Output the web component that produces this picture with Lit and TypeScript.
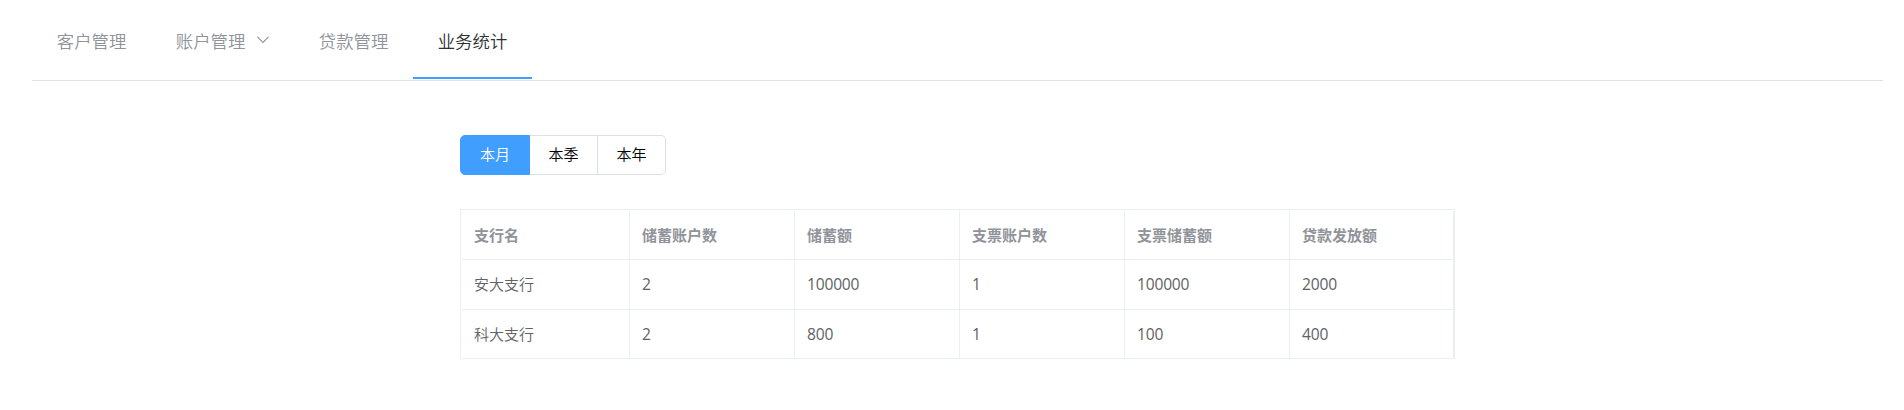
import { LitElement, html, css } from "lit";
import { customElement, state } from "lit/decorators.js";
import { classMap } from "lit/directives/class-map.js";

interface MenuItem {
  label: string;
  submenu?: boolean;
}

const MENU: MenuItem[] = [
  { label: "客户管理" },
  { label: "账户管理", submenu: true },
  { label: "贷款管理" },
  { label: "业务统计" },
];

const PERIODS = ["本月", "本季", "本年"];

const COLUMNS = ["支行名", "储蓄账户数", "储蓄额", "支票账户数", "支票储蓄额", "贷款发放额"];

const ROWS = [
  ["安大支行", "2", "100000", "1", "100000", "2000"],
  ["科大支行", "2", "800", "1", "100", "400"],
];

@customElement("nav-menu")
export class NavMenu extends LitElement {
  @state() private active = 3;

  static styles = css`
    :host {
      display: block;
      margin: 0 21px 0 32px;
      border-bottom: 1px solid #e1e1e2;
    }
    .menu {
      display: flex;
      height: 76px;
      padding: 4px 0 0;
      box-sizing: content-box;
    }
    .item {
      box-sizing: border-box;
      display: flex;
      align-items: center;
      height: 75px;
      padding: 0 24.6px 0 24.8px;
      border-bottom: 2px solid transparent;
      font-size: 17.4px;
      font-weight: 350;
      line-height: 26px;
      color: #909399;
      white-space: nowrap;
      cursor: pointer;
    }
    .active {
      color: #303133;
      border-bottom-color: #409eff;
    }
    .arrow {
      display: block;
      width: 12px;
      height: 8px;
      margin: 0 0 1px 12px;
      fill: none;
      stroke: #909399;
      stroke-width: 1.1;
    }
  `;

  render() {
    return html`<nav class="menu">
      ${MENU.map(
        (item, i) => html`<div
          class=${classMap({ item: true, active: i === this.active })}
          @click=${() => (this.active = i)}
        >
          <span>${item.label}</span>
          ${item.submenu
            ? html`<svg class="arrow" viewBox="0 0 12 8"><path d="M.7 1.2 6 6.5 11.3 1.2" stroke-linecap="round" /></svg>`
            : null}
        </div>`
      )}
    </nav>`;
  }
}

@customElement("period-switch")
export class PeriodSwitch extends LitElement {
  @state() private selected = 0;

  static styles = css`
    :host {
      display: flex;
    }
    .button {
      box-sizing: border-box;
      width: 68px;
      height: 40px;
      margin: 0;
      padding: 0 0 1px;
      border: 1px solid #dcdfe6;
      border-left: 0;
      background: #fff;
      color: #000;
      font: inherit;
      font-size: 15px;
      font-weight: 350;
      line-height: 1;
      text-align: center;
      cursor: pointer;
    }
    .button:first-child {
      width: 70px;
      border-left: 1px solid #dcdfe6;
      border-radius: 5px 0 0 5px;
    }
    .button:last-child {
      border-radius: 0 5px 5px 0;
    }
    .button.selected {
      background: #409eff;
      border-color: #409eff;
      color: #fff;
    }
  `;

  render() {
    return PERIODS.map(
      (label, i) => html`<button
        class=${classMap({ button: true, selected: i === this.selected })}
        @click=${() => (this.selected = i)}
      >${label}</button>`
    );
  }
}

@customElement("stats-table")
export class StatsTable extends LitElement {
  static styles = css`
    :host {
      display: block;
      box-sizing: border-box;
      width: 995px;
      padding: 1px 0 0 1px;
      border: 1px solid #ebeef5;
      border-width: 1px 1px 0 1px;
    }
    .grid {
      display: grid;
      grid-template-columns: 168px repeat(4, 165px) 164px;
      grid-template-rows: 49px 50px 49px;
    }
    .cell {
      box-sizing: border-box;
      display: flex;
      align-items: center;
      padding: 0 0 2px 12px;
      border-right: 1px solid #ebeef5;
      border-bottom: 1px solid #ebeef5;
      color: #606266;
      font-size: 15px;
      font-weight: 350;
      line-height: 24px;
      white-space: nowrap;
    }
    .number {
      font-size: 15.6px;
      font-weight: 400;
      letter-spacing: -0.2px;
    }
    .last {
      padding-bottom: 0;
    }
    .head {
      padding-bottom: 1px;
      color: #909399;
      font-weight: 700;
    }
  `;

  render() {
    return html`<div class="grid" role="table">
      ${COLUMNS.map((name) => html`<div class="cell head">${name}</div>`)}
      ${ROWS.map((row, r) =>
        row.map(
          (value, i) => html`<div
            class=${classMap({ cell: true, number: i > 0, last: r === ROWS.length - 1 })}
          >${value}</div>`
        )
      )}
    </div>`;
  }
}

@customElement("app-root")
export class AppRoot extends LitElement {
  static styles = css`
    :host {
      display: block;
      height: 410px;
      background: #fff;
      font-family: "Open Sans", "Noto Sans CJK SC", sans-serif;
    }
    .content {
      display: flex;
      flex-direction: column;
      gap: 34px;
      padding: 54px 0 0 460px;
    }
  `;

  render() {
    return html`
      <nav-menu></nav-menu>
      <main class="content">
        <period-switch></period-switch>
        <stats-table></stats-table>
      </main>
    `;
  }
}
